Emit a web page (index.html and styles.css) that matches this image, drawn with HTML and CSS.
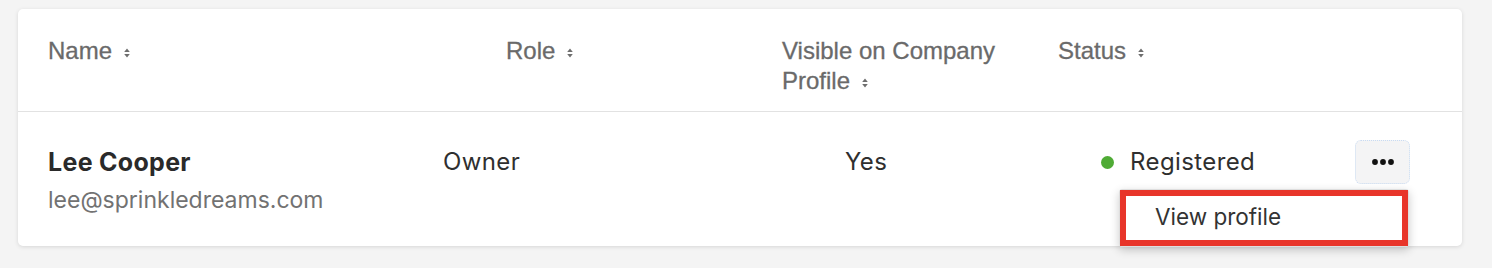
FILE: index.html
```html
<!DOCTYPE html>
<html lang="en">
<head>
<meta charset="utf-8">
<link rel="stylesheet" href="styles.css">
</head>
<body>
<div class="card">
  <div class="thead">
    <div class="th"><span class="nw">Name<span class="sort"><svg viewBox="0 0 6 10" width="6" height="10"><path d="M3 0.5L5.8 4H0.2Z M3 9.5L5.8 6H0.2Z" fill="#6e6e6e"/></svg></span></span></div>
    <div class="th"><span class="nw">Role<span class="sort"><svg viewBox="0 0 6 10" width="6" height="10"><path d="M3 0.5L5.8 4H0.2Z M3 9.5L5.8 6H0.2Z" fill="#6e6e6e"/></svg></span></span></div>
    <div class="th th-vis">Visible on Company <span class="nw">Profile<span class="sort"><svg viewBox="0 0 6 10" width="6" height="10"><path d="M3 0.5L5.8 4H0.2Z M3 9.5L5.8 6H0.2Z" fill="#6e6e6e"/></svg></span></span></div>
    <div class="th"><span class="nw">Status<span class="sort"><svg viewBox="0 0 6 10" width="6" height="10"><path d="M3 0.5L5.8 4H0.2Z M3 9.5L5.8 6H0.2Z" fill="#6e6e6e"/></svg></span></span></div>
  </div>
  <div class="row">
    <div class="cell name-cell">
      <div class="name">Lee Cooper</div>
      <div class="email">lee@sprinkledreams.com</div>
    </div>
    <div class="cell">Owner</div>
    <div class="cell">Yes</div>
    <div class="cell status"><span class="dot"></span>Registered</div>
    <div class="cell actions">
      <button class="more" type="button" aria-label="More actions">
        <svg viewBox="0 0 22 6" width="22" height="6"><circle cx="3" cy="3" r="2.9" fill="#111"/><circle cx="11" cy="3" r="2.9" fill="#111"/><circle cx="19" cy="3" r="2.9" fill="#111"/></svg>
      </button>
      <div class="menu">
        <div class="menu-item">View profile</div>
      </div>
    </div>
  </div>
</div>
</body>
</html>
```

FILE: styles.css
```css
html, body {
  margin: 0;
  padding: 0;
}
body {
  background: #f4f4f4;
  width: 1492px;
  height: 268px;
  padding: 9px 30px 0 18px;
  box-sizing: border-box;
  font-family: Inter, "Liberation Sans", sans-serif;
}
.card {
  background: #fff;
  border-radius: 5px;
  box-shadow: 0 1px 4px rgba(0, 0, 0, 0.12);
  width: 1444px;
}
.thead {
  display: grid;
  grid-template-columns: 458px 276px 276px 1fr;
  padding: 27px 0 15px 30px;
  border-bottom: 1px solid #e2e2e2;
  font-family: "Liberation Sans", Arial, sans-serif;
  font-size: 24px;
  line-height: 30px;
  color: #6a6a6a;
  -webkit-text-stroke: 0.3px #6a6a6a;
}
.th-vis {
  max-width: 232px;
}
.nw {
  white-space: nowrap;
}
.sort {
  display: inline-block;
  margin-left: 12px;
  vertical-align: 1px;
}
.sort svg {
  display: block;
}
.row {
  display: grid;
  grid-template-columns: 395px 402px 256px 254px 1fr;
  padding: 31px 0 27px 30px;
  font-size: 24px;
  letter-spacing: 0.4px;
  line-height: 38px;
  color: #2f2f2f;
}
.name {
  font-weight: 700;
  font-size: 25px;
  letter-spacing: 0.3px;
  color: #2a2a2a;
}
.email {
  color: #727272;
  font-size: 23px;
  letter-spacing: 0;
}
.status {
  display: flex;
  align-items: flex-start;
}
.dot {
  width: 13px;
  height: 13px;
  border-radius: 50%;
  background: #4fab35;
  margin: 13px 16px 0 0;
  flex: none;
}
.actions {
  position: relative;
}
.more {
  width: 55px;
  height: 44px;
  margin-top: -3px;
  border: 1px dotted #c8dbf3;
  border-radius: 6px;
  background: #f4f4f5;
  display: flex;
  align-items: center;
  justify-content: center;
  padding: 0;
}
.more svg {
  display: block;
}
.menu {
  position: absolute;
  top: 46px;
  right: 53px;
  width: 288px;
  background: #fff;
  border-radius: 3px;
  box-shadow: 0 3px 10px rgba(0, 0, 0, 0.2);
  border: 1px solid #dedede;
}
.menu-item {
  border: 6px solid #e8352a;
  height: 56px;
  box-sizing: border-box;
  padding-left: 29px;
  font-size: 22.5px;
  letter-spacing: 0;
  line-height: 42px;
  color: #333;
}
```
